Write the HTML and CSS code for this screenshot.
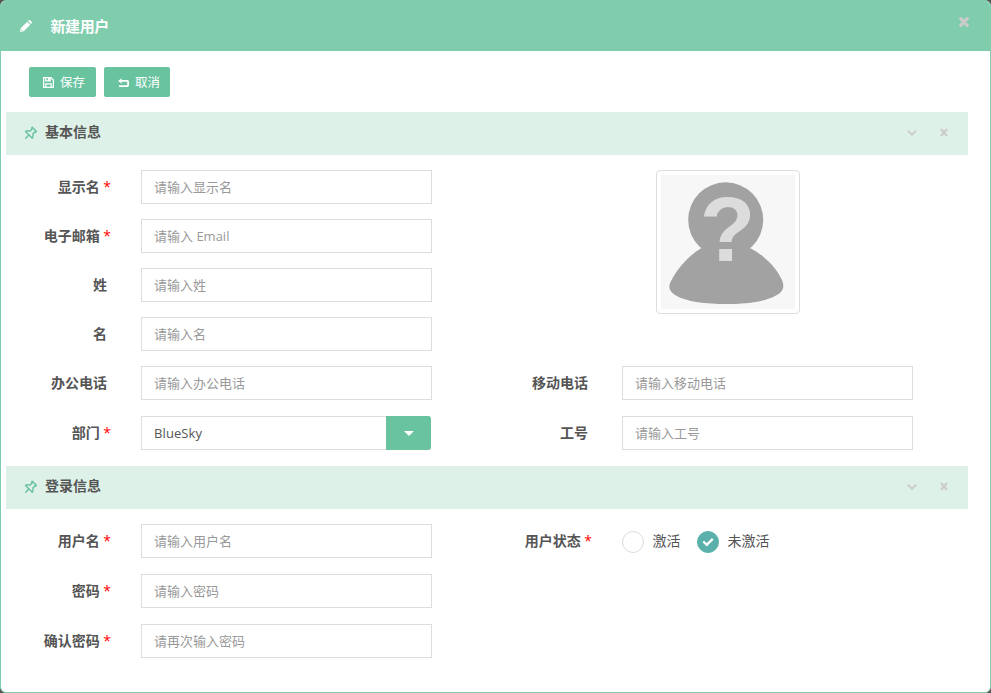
FILE: index.html
```html
<!DOCTYPE html>
<html lang="zh-CN">
<head>
<meta charset="utf-8">
<title>新建用户</title>
<link rel="stylesheet" href="styles.css">
</head>
<body>
<svg width="0" height="0" class="defs" aria-hidden="true">
  <symbol id="pin" viewBox="0 0 14 14"><path d="M8.300 1.200 12.300 5.200 11.600 6.300 10.600 6.100 8.900 8.100Q9.700 10.300 8.300 12.300L1.500 5.500Q3.700 4.100 5.900 5.100L7.900 3.400 7.700 2.200ZM5 8.800 1.700 12.200" fill="none" stroke="currentColor" stroke-width="1.500" stroke-linejoin="round" stroke-linecap="round"/></symbol>
  <symbol id="down" viewBox="0 0 10 6"><path d="M.9.800 5 4.700 9.100.8" fill="none" stroke="currentColor" stroke-width="2"/></symbol>
  <symbol id="cross" viewBox="0 0 8 9"><path d="M1 1 7 8M7 1 1 8" fill="none" stroke="currentColor" stroke-width="2.200"/></symbol>
</svg>
<div class="modal">
  <header class="modal-head">
    <svg class="pencil" width="12" height="12" viewBox="0 0 12 12"><path fill="#fff" fill-rule="evenodd" d="M0 12 .7 8.300 7.300 1.700 10.300 4.700 3.700 11.300ZM1.400 9.300 1.200 10.200 1.900 10.800 2.700 10.600ZM8 1 8.700.3Q9.400-.3 10.100.3L11.700 1.900Q12.300 2.600 11.700 3.300L11 4Z"/></svg>
    <h1>新建用户</h1>
    <svg class="close" width="10" height="10" viewBox="0 0 10 10"><path d="M1.700 1.700 8.300 8.300M8.300 1.700 1.700 8.300" stroke="#ccc" stroke-width="3.200" stroke-linecap="round"/></svg>
  </header>
  <div class="toolbar">
    <button class="btn save"><svg width="11" height="11" viewBox="0 0 11 11"><path d="M.6.600H7.900L10.400 3.100V10.400H.6ZM2.800 10.400V6.800H8.200V10.400M2.800.6V3.900H7.200V.6M5.700 1V3.500" fill="none" stroke="#fff" stroke-width="1.300"/></svg><span>保存</span></button>
    <button class="btn cancel"><svg width="11" height="10" viewBox="0 0 11 10"><path d="M2 2.900H9.100Q10.100 2.900 10.100 3.800V7.200Q10.100 8.100 9.200 8.100H1" fill="none" stroke="#fff" stroke-width="1.800"/><path d="M3.600.300V5.500L0 2.900Z" fill="#fff"/></svg><span>取消</span></button>
  </div>

  <section>
    <div class="section-head">
      <svg class="pin" width="14" height="14"><use href="#pin"/></svg><h2>基本信息</h2>
      <svg class="down" width="10" height="6"><use href="#down"/></svg><svg width="8" height="9"><use href="#cross"/></svg>
    </div>
    <div class="columns">
      <div class="fields">
        <div class="row"><label class="req">显示名 <i>*</i></label><input placeholder="请输入显示名"></div>
        <div class="row"><label class="req">电子邮箱 <i>*</i></label><input placeholder="请输入 Email"></div>
        <div class="row"><label>姓</label><input placeholder="请输入姓"></div>
        <div class="row"><label>名</label><input placeholder="请输入名"></div>
        <div class="row"><label>办公电话</label><input placeholder="请输入办公电话"></div>
        <div class="row last"><label class="req">部门 <i>*</i></label><div class="select"><span>BlueSky</span><b></b></div></div>
      </div>
      <div class="fields side">
        <div class="avatar">
          <svg width="134" height="134" viewBox="0 0 134 134"><circle cx="64.700" cy="44.800" r="37.500"/><path d="M40.500 73Q64 84 89 73C104 81 115 92 121 105C124 112 122 117 114 121C103 127 84 129 65 129C46 129 25 127 14 120C8 116 7 112 10 106C17 93 27 81 40.500 73Z"/><text x="66.500" y="85.500">?</text></svg>
        </div>
        <div class="row"><label>移动电话</label><input placeholder="请输入移动电话"></div>
        <div class="row last"><label>工号</label><input placeholder="请输入工号"></div>
      </div>
    </div>
  </section>

  <section class="login">
    <div class="section-head">
      <svg class="pin" width="14" height="14"><use href="#pin"/></svg><h2>登录信息</h2>
      <svg class="down" width="10" height="6"><use href="#down"/></svg><svg width="8" height="9"><use href="#cross"/></svg>
    </div>
    <div class="columns">
      <div class="fields">
        <div class="row"><label class="req">用户名 <i>*</i></label><input placeholder="请输入用户名"></div>
        <div class="row"><label class="req">密码 <i>*</i></label><input placeholder="请输入密码"></div>
        <div class="row"><label class="req">确认密码 <i>*</i></label><input placeholder="请再次输入密码"></div>
      </div>
      <div class="fields side">
        <div class="row"><label class="req">用户状态 <i>*</i></label>
          <div class="radios">
            <span class="radio"></span><span class="radio-text">激活</span>
            <span class="radio on"><svg width="12" height="10" viewBox="0 0 12 10"><path d="M1.300 4.500 4.800 7.800 10.700 1.800" fill="none" stroke="#fff" stroke-width="2.400"/></svg></span><span class="radio-text">未激活</span>
          </div>
        </div>
      </div>
    </div>
  </section>
</div>
</body>
</html>
```
FILE: styles.css
```css
* { box-sizing: border-box; }
body {
  margin: 0;
  background: #555;
  color: #555;
  font: 14px/20px "Open Sans", "Noto Sans CJK SC", sans-serif;
}
svg { display: block; flex: none; }
.defs { position: absolute; }
h1, h2 { margin: 0; font-weight: 700; }

.modal {
  height: 693px;
  border: 1px solid #80cdae;
  border-radius: 6px;
  background: #fff;
  overflow: hidden;
}
.modal-head {
  display: flex;
  align-items: center;
  height: 50px;
  padding: 0 21.5px 0 19px;
  background: #80cdae;
}
.modal-head h1 { flex: 1; margin-left: 18.5px; color: #fff; font-size: 15px; letter-spacing: -.4px; }
.close { margin-bottom: 9px; }

.toolbar { display: flex; gap: 8px; padding: 16px 28px 15px; }
.btn {
  display: flex;
  align-items: center;
  height: 30px;
  padding: 1px 0 0 14px;
  border: 0;
  border-radius: 2px;
  background: #69c39f;
  color: #fff;
  font: 12.500px/18px "Open Sans", "Noto Sans CJK SC", sans-serif;
}
.btn span { margin-left: 6px; }
.save { width: 67px; }
.cancel { width: 66px; }

.section-head {
  display: flex;
  align-items: center;
  width: 962px;
  height: 43px;
  margin-left: 5px;
  padding: 0 20px 2px 18px;
  background: #def1e8;
  color: #ccc;
}
.section-head h2 { flex: 1; margin-left: 7px; padding-bottom: 2px; color: #555; font-size: 14px; }
.pin { color: #69c39f; }
.down { margin-right: 23px; }

.columns { display: flex; padding-top: 15px; }
.fields { display: flex; flex-direction: column; gap: 15px; width: 481px; }
.row { display: flex; align-items: center; height: 34px; }
.last { margin-top: 1px; }
label { width: 106px; margin-right: 34px; font-weight: 700; text-align: right; white-space: nowrap; }
.req { width: 110px; margin-right: 30px; }
label i { color: #f00; font-size: 14px; line-height: 1; font-style: normal; font-weight: 400; }

input, .select {
  width: 291px;
  height: 34px;
  padding: 0 12px;
  border: 1px solid #ddd;
  background: #fff;
  color: #555;
  font: 13px/20px "Open Sans", "Noto Sans CJK SC", sans-serif;
}
input::placeholder { color: #999; opacity: 1; }
.select { display: flex; align-items: center; justify-content: space-between; width: 290px; padding-right: 0; border-right: 0; border-radius: 0 3px 3px 0; }
.select span { letter-spacing: .1px; }
.select b {
  display: flex;
  align-items: center;
  justify-content: center;
  width: 45px;
  height: 34px;
  border-radius: 0 3px 3px 0;
  background: #69c39f;
}
.select b::after { content: ""; border: 5px solid transparent; border-top-color: #fff; border-bottom: 0; }

.avatar {
  width: 144px;
  height: 144px;
  margin: 0 0 37px 174px;
  padding: 4px;
  border: 1px solid #ddd;
  border-radius: 4px;
}
.avatar svg { background: #f7f7f7; fill: #a2a2a2; }
.avatar text { fill: #dcdcdc; font: 700 91px "Liberation Sans", sans-serif; text-anchor: middle; }

.login { padding-top: 16px; }
.login .fields { gap: 16px; }
.radios { display: flex; align-items: center; }
.radio {
  display: flex;
  align-items: center;
  justify-content: center;
  width: 22px;
  height: 22px;
  margin-top: 2px;
  border: 1px solid #deddd5;
  border-radius: 50%;
}
.radio.on { border-color: #5ab1ac; background: #5ab1ac; }
.radio-text { margin: 0 16.5px 0 8.5px; }
```
